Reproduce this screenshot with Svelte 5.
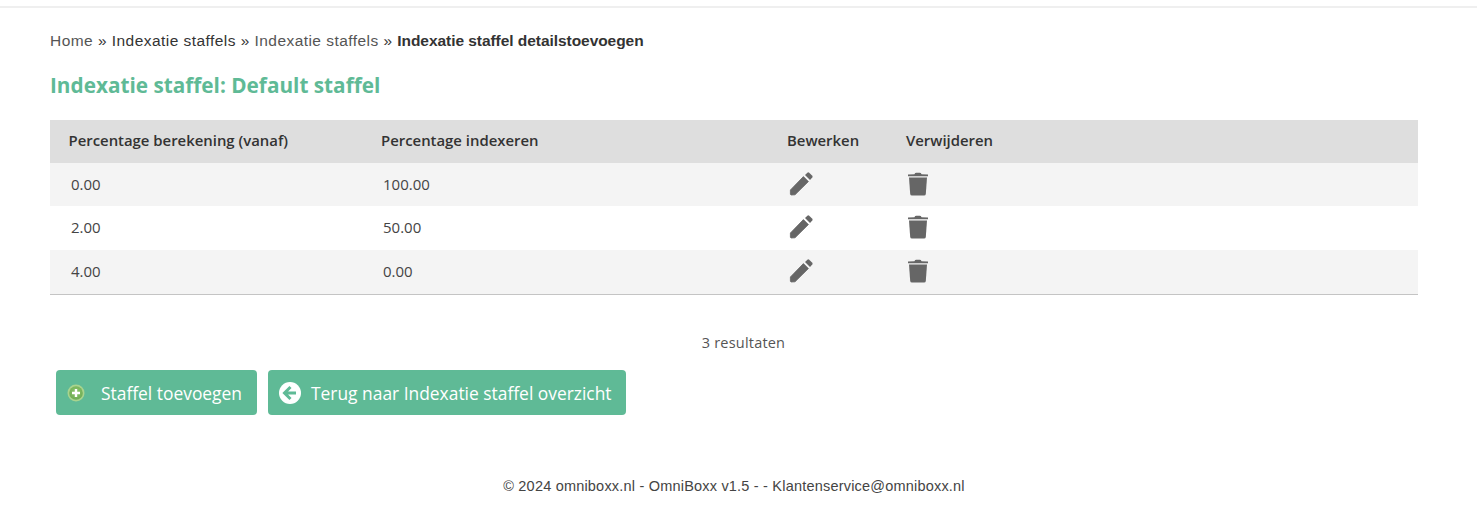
<script>
  const rows = [
    { from: "0.00", index: "100.00", h: 43 },
    { from: "2.00", index: "50.00", h: 44 },
    { from: "4.00", index: "0.00", h: 44 },
  ];
</script>

<div class="page">
  <div class="topline"></div>
  <div class="content">
    <div class="breadcrumb">
      <span class="light">Home</span> » <span>Indexatie staffels</span> » <span class="light">Indexatie staffels</span> » <strong>Indexatie staffel detailstoevoegen</strong>
    </div>

    <h2>Indexatie staffel: Default staffel</h2>

    <div class="table">
      <div class="row head">
        <div class="c1">Percentage berekening (vanaf)</div>
        <div class="c2">Percentage indexeren</div>
        <div class="c3">Bewerken</div>
        <div class="c4">Verwijderen</div>
      </div>
      {#each rows as r}
        <div class="row body" style="height: {r.h}px">
          <div class="c1 val">{r.from}</div>
          <div class="c2 val">{r.index}</div>
          <div class="c3">
            <svg class="icon pencil" width="24" height="24" viewBox="0 0 24 24">
              <path d="M1.4 22.2 L1.4 18 L14.4 4.6 L19.4 9.6 L6 22.8 L2 23 Z" stroke="#666" stroke-width="0.8" stroke-linejoin="round" />
              <path d="M16 3 L18.4 0.7 Q19.3 0 20.2 0.7 L23.3 3.8 Q24 4.7 23.3 5.6 L21 8 Z" />
            </svg>
          </div>
          <div class="c4">
            <svg class="icon trash" width="20" height="24" viewBox="0 0 20 24">
              <path d="M0 2.6 L6.4 2.2 Q7 0.8 8.4 0.8 L11.6 0.8 Q13 0.8 13.6 2.2 L20 2.6 L20 4.2 L0 4.2 Z" />
              <path d="M1 5.6 L19 5.6 L17.8 22 Q17.6 23.6 16 23.6 L4 23.6 Q2.4 23.6 2.2 22 Z" />
            </svg>
          </div>
        </div>
      {/each}
    </div>

    <div class="results">3 resultaten</div>

    <div class="buttons">
      <button class="btn add">
        <svg class="plus" width="18" height="18" viewBox="0 0 18 18">
          <defs>
            <radialGradient id="g" cx="50%" cy="40%" r="60%">
              <stop offset="0" stop-color="#8cc66c" />
              <stop offset="1" stop-color="#6fab55" />
            </radialGradient>
          </defs>
          <circle cx="9" cy="9" r="8.5" fill="#a8d48e" />
          <circle cx="9" cy="9" r="6.8" fill="url(#g)" />
          <path d="M7.8 5h2.4v2.8H13v2.4h-2.8V13H7.8v-2.8H5V7.8h2.8z" fill="#fff" />
        </svg>
        Staffel toevoegen
      </button>
      <button class="btn back">
        <svg width="22" height="22" viewBox="0 0 22 22">
          <circle cx="11" cy="11" r="11" fill="#fff" />
          <path d="M11.5 5 L5.5 11 L11.5 17 M6 11 H17" fill="none" stroke="#5fba96" stroke-width="3" />
        </svg>
        Terug naar Indexatie staffel overzicht
      </button>
    </div>

    <div class="footer">© 2024 omniboxx.nl - <span>OmniBoxx v1.5</span> - - Klantenservice@omniboxx.nl</div>
  </div>
</div>

<style>
  :global(body) {
    background: #fff;
    font-family: "Open Sans", sans-serif;
  }

  .page {
    height: 526px;
    overflow: hidden;
  }

  .topline {
    height: 6px;
    border-bottom: 2px solid #efefef;
  }

  .content {
    padding: 0 59px 0 50px;
  }

  .breadcrumb {
    margin-top: 23px;
    height: 20px;
    line-height: 20px;
    font-family: "Liberation Sans", sans-serif;
    font-size: 15.5px;
    letter-spacing: 0.45px;
    color: #333;
    white-space: nowrap;
  }

  .breadcrumb strong {
    letter-spacing: -0.05px;
  }

  .light {
    color: #555;
  }

  h2 {
    margin: 20px 0 0;
    height: 29px;
    line-height: 29px;
    font-size: 20.75px;
    font-weight: 700;
    color: #5fba96;
  }

  .table {
    margin-top: 20px;
    border-bottom: 1px solid #c4c4c4;
  }

  .row {
    display: flex;
    align-items: center;
    box-sizing: border-box;
    font-size: 15px;
    color: #444;
  }

  .head {
    height: 43px;
    padding-bottom: 3px;
    background: #dedede;
    font-size: 14.9px;
    font-weight: 600;
    color: #333;
  }

  .body {
    padding-bottom: 2px;
  }

  .body:nth-child(even) {
    background: #f4f4f4;
  }

  .c1 {
    width: 331px;
    padding-left: 18.5px;
    box-sizing: border-box;
  }

  .c2 {
    width: 406px;
    box-sizing: border-box;
  }

  .c3 {
    width: 119px;
  }

  .c1.val {
    padding-left: 21px;
  }

  .c2.val {
    padding-left: 2px;
  }

  .icon {
    display: block;
    fill: #666;
  }

  .pencil {
    margin-left: 2px;
  }

  .trash {
    margin-left: 2px;
  }

  .results {
    margin-top: 38px;
    text-align: center;
    font-size: 14.5px;
    line-height: 20px;
    color: #555;
    letter-spacing: 0.2px;
    padding-left: 19px;
  }

  .buttons {
    display: flex;
    gap: 11px;
    margin: 17px 0 0 6px;
  }

  .btn {
    display: flex;
    align-items: center;
    height: 45px;
    border: none;
    border-radius: 4px;
    background: #5fba96;
    color: #fff;
    font-family: "Open Sans", sans-serif;
    font-size: 17.4px;
    padding: 0 15px 0 11px;
  }

  .back {
    padding-right: 14px;
  }

  .add svg {
    margin-right: 16px;
  }

  .back svg {
    margin-right: 10px;
  }

  .footer {
    margin-top: 61px;
    text-align: center;
    font-family: "Liberation Sans", sans-serif;
    font-size: 14.5px;
    line-height: 20px;
    color: #444;
    letter-spacing: 0.2px;
  }
</style>
